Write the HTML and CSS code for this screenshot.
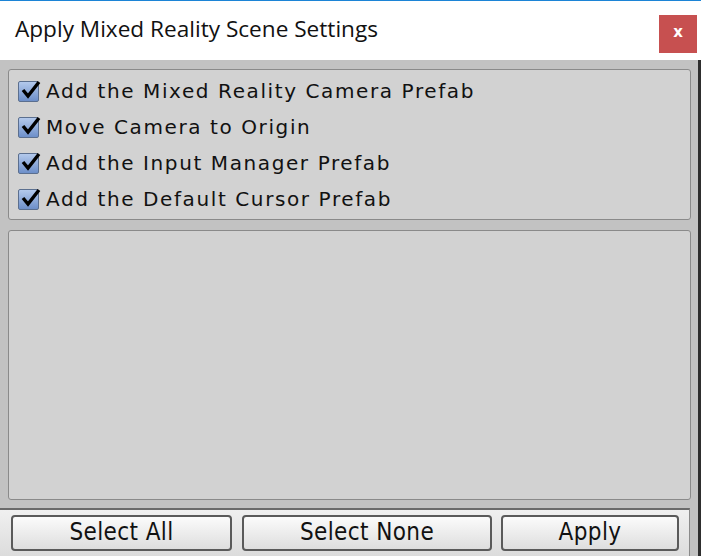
FILE: index.html
```html
<!DOCTYPE html>
<html lang="en">
<head>
    <meta charset="UTF-8">
    <title>Apply Mixed Reality Scene Settings</title>
    <link rel="stylesheet" href="styles.css">
</head>
<body>
 <div class="window">
    <div class="titlebar">
        <span class="title">Apply Mixed Reality Scene Settings</span>
        <div class="close">x</div>
    </div>
    <div class="content">
        <div class="group options">
            <label class="option"><span class="check"><svg viewBox="0 0 24 22" width="24" height="22"><path d="M4 11 L9 17 L20 3" fill="none" stroke="#000" stroke-width="3.4"/></svg></span>Add the Mixed Reality Camera Prefab</label>
            <label class="option"><span class="check"><svg viewBox="0 0 24 22" width="24" height="22"><path d="M4 11 L9 17 L20 3" fill="none" stroke="#000" stroke-width="3.4"/></svg></span>Move Camera to Origin</label>
            <label class="option"><span class="check"><svg viewBox="0 0 24 22" width="24" height="22"><path d="M4 11 L9 17 L20 3" fill="none" stroke="#000" stroke-width="3.4"/></svg></span>Add the Input Manager Prefab</label>
            <label class="option"><span class="check"><svg viewBox="0 0 24 22" width="24" height="22"><path d="M4 11 L9 17 L20 3" fill="none" stroke="#000" stroke-width="3.4"/></svg></span>Add the Default Cursor Prefab</label>
        </div>
        <div class="group empty"></div>
    </div>
    <div class="toolbar">
        <button class="btn b-all">Select All</button>
        <button class="btn b-none">Select None</button>
        <button class="btn b-apply">Apply</button>
    </div>
 </div>
</body>
</html>
```

FILE: styles.css
```css
*{
    margin: 0;
    padding: 0;
    box-sizing: border-box;
}
body{
    width: 701px;
    height: 556px;
    overflow: hidden;
    background-color: #2e2e2e;
}
.window{
    width: 698px;
    height: 556px;
    display: flex;
    flex-direction: column;
    background-color: #c2c2c2;
}
.titlebar{
    height: 60px;
    background-color: white;
    border-top: 1px solid #1c84d6;
    display: flex;
    align-items: center;
    justify-content: space-between;
    padding: 0 2px 4px 15px;
    width: 701px;
}
.title{
    font-family: "Open Sans", "Noto Sans", sans-serif;
    font-size: 22.6px;
    color: #111;
}
.close{
    width: 38px;
    height: 38px;
    margin-right: 2px;
    margin-top: 10px;
    background-color: #c75050;
    color: white;
    font-family: "DejaVu Sans", sans-serif;
    font-weight: bold;
    font-size: 15px;
    display: flex;
    align-items: center;
    justify-content: center;
    padding-bottom: 3px;
}
.content{
    flex: 1;
    padding: 9px 7px 8px 8px;
    display: flex;
    flex-direction: column;
    gap: 10px;
}
.group{
    background-color: #d2d2d2;
    border: 1px solid #8a8a8a;
    border-radius: 3px;
}
.options{
    height: 151px;
    padding: 3px 0 0 9px;
}
.empty{
    flex: 1;
}
.option{
    display: flex;
    align-items: center;
    height: 36px;
    font-family: "DejaVu Sans", sans-serif;
    font-size: 20px;
    letter-spacing: 1.6px;
    color: #111;
}
.check{
    position: relative;
    width: 21px;
    height: 21px;
    margin-right: 7px;
    border: 1px solid #5b6f8f;
    border-radius: 2px;
    background: linear-gradient(#b3c9ec, #6d8fc9);
}
.check svg{
    position: absolute;
    left: 0px;
    top: -3px;
}
.toolbar{
    height: 48px;
    border-top: 2px solid #6a6a6a;
    border-right: 1px solid #8a8a8a;
    margin-right: 8px;
    background: linear-gradient(#f0f0f0, #dcdcdc);
    display: flex;
    align-items: center;
    padding: 0 0 0 11px;
    gap: 10px;
}
.btn{
    height: 36px;
    border: 2px solid #5a5a5a;
    border-radius: 4px;
    background: linear-gradient(#fbfbfb, #dedede);
    font-family: "DejaVu Sans Condensed", "DejaVu Sans", sans-serif;
    font-size: 24px;
    letter-spacing: 0.4px;
    color: #111;
    padding-bottom: 2px;
}
.b-all{
    width: 221px;
}
.b-none{
    width: 250px;
}
.b-apply{
    width: 178px;
    margin-left: -1px;
}
```
